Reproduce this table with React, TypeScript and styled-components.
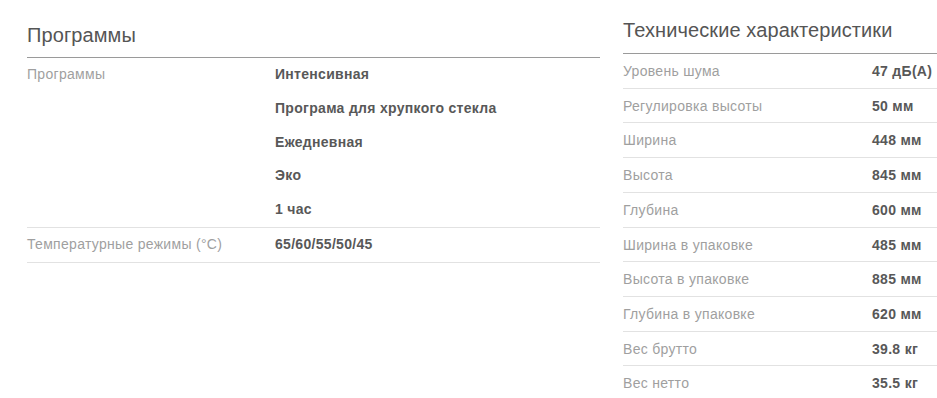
import styled, { createGlobalStyle } from "styled-components";

const GlobalStyle = createGlobalStyle`
    html, body {
        margin: 0;
        padding: 0;
        background: #ffffff;
        font-family: "Liberation Sans", Arial, sans-serif;
    }
`;

const Page = styled.div`
    display: flex;
    align-items: flex-start;
    gap: 23px;
    padding-left: 27px;
    width: 937px;
    box-sizing: border-box;
    overflow: hidden;
`;

const Section = styled.section<{ $top: number; $width: number }>`
    flex: 0 0 ${(p) => p.$width}px;
    padding-top: ${(p) => p.$top}px;
`;

const Title = styled.h2<{ $gap: number }>`
    margin: 0 0 ${(p) => p.$gap}px;
    font-size: 20px;
    line-height: 24px;
    font-weight: normal;
    letter-spacing: 0.1px;
    color: #555555;
`;

const Table = styled.div`
    border-top: 1px solid #9a9a9a;
`;

const Row = styled.div<{ $labelWidth: number; $lh: number; $pad: number }>`
    display: grid;
    grid-template-columns: ${(p) => p.$labelWidth}px 1fr;
    padding-top: ${(p) => p.$pad}px;
    border-bottom: 1px solid #e2e2e2;
    font-size: 14px;
    letter-spacing: 0.3px;
    line-height: ${(p) => p.$lh}px;
`;

const Label = styled.div`
    color: #9f9f9f;
`;

const Values = styled.div`
    display: flex;
    flex-direction: column;
`;

const Value = styled.div`
    color: #585858;
    font-weight: bold;
    white-space: nowrap;
`;

const programs = [
    { label: "Программы", values: ["Интенсивная", "Програма для хрупкого стекла", "Ежедневная", "Эко", "1 час"] },
    { label: "Температурные режимы (°C)", values: ["65/60/55/50/45"] },
];

const specs = [
    ["Уровень шума", "47 дБ(А)"],
    ["Регулировка высоты", "50 мм"],
    ["Ширина", "448 мм"],
    ["Высота", "845 мм"],
    ["Глубина", "600 мм"],
    ["Ширина в упаковке", "485 мм"],
    ["Высота в упаковке", "885 мм"],
    ["Глубина в упаковке", "620 мм"],
    ["Вес брутто", "39.8 кг"],
    ["Вес нетто", "35.5 кг"],
];

const App = () => {
    return (
        <>
            <GlobalStyle />
            <Page>
                <Section $top={23} $width={573}>
                    <Title $gap={10}>Программы</Title>
                    <Table>
                        {programs.map((p) => (
                            <Row key={p.label} $labelWidth={248} $lh={33.8} $pad={0}>
                                <Label>{p.label}</Label>
                                <Values>
                                    {p.values.map((v) => (
                                        <Value key={v}>{v}</Value>
                                    ))}
                                </Values>
                            </Row>
                        ))}
                    </Table>
                </Section>
                <Section $top={18} $width={320}>
                    <Title $gap={11}>Технические характеристики</Title>
                    <Table>
                        {specs.map(([label, value]) => (
                            <Row key={label} $labelWidth={249} $lh={31.7} $pad={2}>
                                <Label>{label}</Label>
                                <Value>{value}</Value>
                            </Row>
                        ))}
                    </Table>
                </Section>
            </Page>
        </>
    );
};

export default App;
